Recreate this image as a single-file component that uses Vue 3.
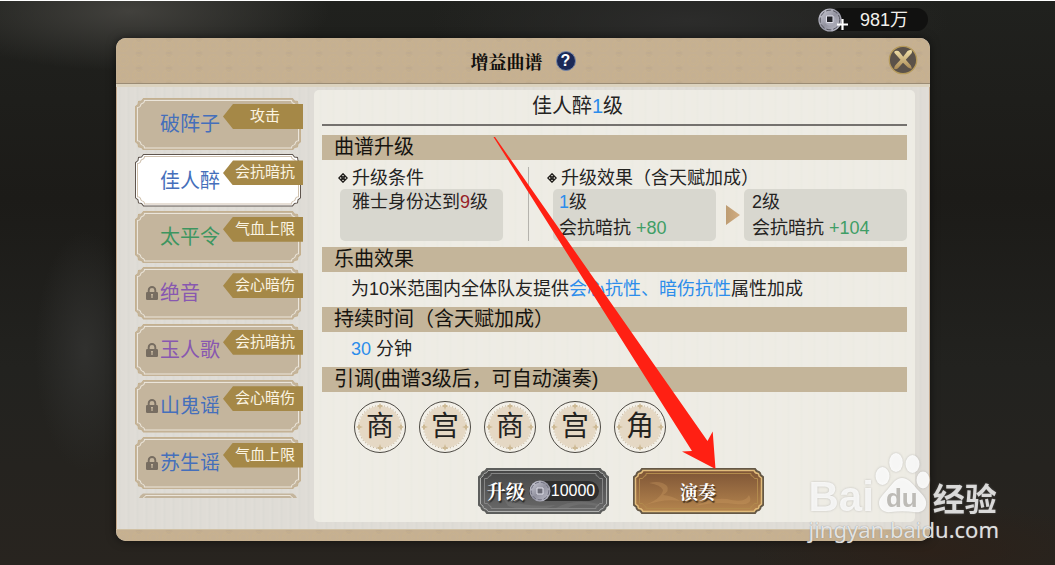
<script setup>
import { ref } from 'vue'

const selected = ref(1)
const songs = [
  { name: '破阵子', tag: '攻击', tone: 'blue', locked: false },
  { name: '佳人醉', tag: '会抗暗抗', tone: 'blue', locked: false },
  { name: '太平令', tag: '气血上限', tone: 'green', locked: false },
  { name: '绝音', tag: '会心暗伤', tone: 'purple', locked: true },
  { name: '玉人歌', tag: '会抗暗抗', tone: 'purple', locked: true },
  { name: '山鬼谣', tag: '会心暗伤', tone: 'blue', locked: true },
  { name: '苏生谣', tag: '气血上限', tone: 'blue', locked: true }
]
const notes = ['商', '宫', '商', '宫', '角']
const dash = '0 3.1'
</script>

<template>
  <div class="stage">
    <div class="wallet">
      <svg class="coin" viewBox="0 0 30 24" aria-hidden="true">
        <defs>
          <linearGradient id="silver" x1="0" y1="0" x2="1" y2="1">
            <stop offset="0" stop-color="#d2d2dc" />
            <stop offset=".5" stop-color="#92929f" />
            <stop offset="1" stop-color="#c4c4d0" />
          </linearGradient>
        </defs>
        <circle cx="12" cy="12" r="11.6" fill="url(#silver)" />
        <circle cx="12" cy="12" r="9.8" fill="none" stroke="#55555f" stroke-dasharray="5 2" />
        <circle cx="12" cy="12" r="5.8" fill="#a9a9b6" />
        <path d="M8.5 8h6.500v6.500h-6.500z" fill="#222228" stroke="#dedee8" />
        <path d="M19 16.500h11M24.500 11v11" stroke="#fff" stroke-width="2.200" />
      </svg>
      <span>981万</span>
    </div>

    <main class="dialog">
      <header class="head">
        <h1>增益曲谱</h1>
        <button class="help" type="button" aria-label="帮助">?</button>
        <button class="close" type="button" aria-label="关闭">
          <svg viewBox="0 0 30 30">
            <defs>
              <linearGradient id="gold" x1="0" y1="0" x2="0" y2="1">
                <stop offset="0" stop-color="#f0e0aa" />
                <stop offset="1" stop-color="#a98953" />
              </linearGradient>
            </defs>
            <circle cx="15" cy="15" r="13.700" fill="#5b5249" stroke="#b59a5b" stroke-width="1.300" />
            <path d="M6.500 8Q5.500 6 8.500 5.700Q10.500 5.500 11.500 7L15.200 11.800L19.500 6Q22.500 4.300 24 5.500Q24.500 7.500 22.500 9.500L17.800 14.800L22.800 20.500Q24 22.500 23.500 24L20 22.500L15 17.700L10 23.300Q7.500 25 6 23.500Q6.200 21 8.500 19L12.500 14.700Z" fill="url(#gold)" />
          </svg>
        </button>
      </header>

      <div class="body">
        <nav class="songs">
          <button
            v-for="(song, i) in songs"
            :key="song.name"
            type="button"
            class="song"
            :class="[song.tone, { active: selected === i }]"
            @click="selected = i"
          >
            <svg class="frame" viewBox="0 0 166 52" preserveAspectRatio="none" aria-hidden="true">
              <path class="outer" d="M8.500 .500H157.500L159.500 3L162.500 3.500L163 6.500L165.500 8.500V43.500L163 45.500L162.500 48.500L159.500 49L157.500 51.500H8.500L6.500 49L3.500 48.500L3 45.500L.500 43.500V8.500L3 6.500L3.500 3.500L6.500 3Z" />
              <path class="inner" d="M9.500 2.500H156.500Q156.500 5 159 5.500Q160.500 6 160.500 8Q161.500 9.500 163.500 9.500V42.500Q161.500 42.500 160.500 44Q160.500 46 159 46.500Q156.500 47 156.500 49.500H9.500Q9.500 47 7 46.500Q5.500 46 5.500 44Q4.500 42.500 2.500 42.500V9.500Q4.500 9.500 5.500 8Q5.500 6 7 5.500Q9.500 5 9.500 2.500Z" />
            </svg>
            <svg v-if="song.locked" class="lock" viewBox="0 0 12 14" aria-label="未解锁">
              <path d="M2.700 7V4.300a3.300 3.300 0 0 1 6.600 0V7" fill="none" stroke="#776d61" stroke-width="1.900" />
              <rect x="0" y="6" width="12" height="8" rx="1.200" fill="#776d61" />
              <path d="M6 8v4M5 8.700h2" stroke="#c4b59d" stroke-width="1.300" />
            </svg>
            <span class="name">{{ song.name }}</span>
            <span class="tag">{{ song.tag }}</span>
          </button>
          <div class="next">
            <svg viewBox="0 0 166 5" preserveAspectRatio="none" aria-hidden="true">
              <path d="M4 5Q5 2 8 .500H158Q161 2 162 5Z" fill="#c4b59d" />
              <path d="M8 5Q10 4.500 10.500 2.500H155.500Q156 4.500 158 5" fill="none" stroke="#ebe5da" />
            </svg>
          </div>
        </nav>

        <section class="detail">
          <h2>佳人醉<em>1</em>级</h2>

          <h3>曲谱升级</h3>
          <div class="upgrade">
            <h4 class="need">
              <svg viewBox="0 0 10 10"><path d="M5 .8L9.200 5L5 9.200L.8 5ZM5 3.600L6.400 5L5 6.400L3.600 5ZM2.800 2.800L4.300 4.300M7.200 2.800L5.700 4.300M2.800 7.200L4.300 5.700M7.200 7.200L5.700 5.700" /></svg>
              升级条件
            </h4>
            <i class="divider"></i>
            <h4 class="gain">
              <svg viewBox="0 0 10 10"><path d="M5 .8L9.200 5L5 9.200L.8 5ZM5 3.600L6.400 5L5 6.400L3.600 5ZM2.800 2.800L4.300 4.300M7.200 2.800L5.700 4.300M2.800 7.200L4.300 5.700M7.200 7.200L5.700 5.700" /></svg>
              升级效果（含天赋加成）
            </h4>
            <div class="card require"><p>雅士身份达到<b>9</b>级</p></div>
            <div class="card now"><p><em>1</em>级</p><p>会抗暗抗 <ins>+80</ins></p></div>
            <i class="triangle"></i>
            <div class="card after"><p>2级</p><p>会抗暗抗 <ins>+104</ins></p></div>
          </div>

          <h3>乐曲效果</h3>
          <p class="line">为10米范围内全体队友提供<em>会心抗性、暗伤抗性</em>属性加成</p>

          <h3>持续时间（含天赋加成）</h3>
          <p class="line"><em>30</em> 分钟</p>

          <h3>引调(曲谱3级后，可自动演奏)</h3>
          <div class="notes">
            <div v-for="(note, i) in notes" :key="i" class="note">
              <svg viewBox="0 0 52 52" aria-hidden="true">
                <circle cx="26" cy="26" r="25.500" fill="#f3f0e8" stroke="#4c4943" />
                <circle cx="26" cy="26" r="21" fill="#e5d8c4" />
                <circle cx="26" cy="26" r="21.500" fill="none" stroke="#b8a88e" stroke-linecap="round" :stroke-dasharray="dash" />
                <path d="M26 2l1 2h1.500v2H27l-1 3l-1-3h-1.500V4H25zM26 50l1-2h1.500v-2H27l-1-3l-1 3h-1.500v2H25zM2 26l2-1v-1.500h2V25l3 1l-3 1v1.500H4V27zM50 26l-2-1v-1.500h-2V25l-3 1l3 1v1.500h2V27z" fill="#cdb994" />
              </svg>
              <span>{{ note }}</span>
            </div>
          </div>

          <div class="actions">
            <button class="act dark" type="button">
              <svg class="frame" viewBox="0 0 131 46" preserveAspectRatio="none" aria-hidden="true">
                <defs>
                  <linearGradient id="slate" x1="0" y1="0" x2="0" y2="1">
                    <stop offset="0" stop-color="#464646" />
                    <stop offset="1" stop-color="#6a6a6a" />
                  </linearGradient>
                </defs>
                <path d="M9 1H122Q123.500 4 126 4Q127.500 5 127.500 7L130 9V37L127.500 39Q127.500 41 126 42Q123.500 42 122 45H9Q7.500 42 5 42Q3.500 41 3.500 39L1 37V9L3.500 7Q3.500 5 5 4Q7.500 4 9 1Z" fill="url(#slate)" stroke="#5d5e5c" stroke-width="2" />
                <path d="M10 2.500H121Q122 5.500 125 5.500Q126 6 126 8L128.500 10V36L126 38Q126 40 125 40.500Q122 40.500 121 43.500H10Q9 40.500 6 40.500Q5 40 5 38L2.500 36V10L5 8Q5 6 6 5.500Q9 5.500 10 2.500Z" fill="none" stroke="#b0b1af" />
                <path d="M13 5.500H118V7.500Q120 7.500 121.500 10.500H124.500V35.500H121.500Q120 38.500 118 38.500V40.500H13V38.500Q11 38.500 9.500 35.500H6.500V10.500H9.500Q11 7.500 13 7.500Z" fill="none" stroke="#858585" />
                <path d="M25 30Q44 40 78 37Q58 46 30 38ZM78 40Q95 30 121 36V38Q98 34 90 40Z" fill="#909090" opacity=".25" />
              </svg>
              <span class="label">升级</span>
              <span class="cost">
                <svg viewBox="0 0 22 22" aria-hidden="true">
                  <circle cx="11" cy="11" r="10.500" fill="url(#silver)" />
                  <circle cx="11" cy="11" r="8.800" fill="none" stroke="#6d6d7c" stroke-dasharray="4 2" />
                  <path d="M8 8h6v6h-6z" fill="#6b6b76" stroke="#e2e2ec" />
                </svg>
                10000
              </span>
            </button>
            <button class="act bronze" type="button">
              <svg class="frame" viewBox="0 0 131 46" preserveAspectRatio="none" aria-hidden="true">
                <defs>
                  <linearGradient id="bronze" x1="0" y1="0" x2="0" y2="1">
                    <stop offset="0" stop-color="#7c5335" />
                    <stop offset="1" stop-color="#b7874f" />
                  </linearGradient>
                </defs>
                <path d="M9 1H122Q123.500 4 126 4Q127.500 5 127.500 7L130 9V37L127.500 39Q127.500 41 126 42Q123.500 42 122 45H9Q7.500 42 5 42Q3.500 41 3.500 39L1 37V9L3.500 7Q3.500 5 5 4Q7.500 4 9 1Z" fill="url(#bronze)" stroke="#655846" stroke-width="2" />
                <path d="M16 15Q28 12 34 18Q37 23 30 27Q40 28 47 33Q32 30 9 38Q29 31 30 22Q28 17 16 15ZM62 38Q80 29 94 31Q112 36 116 27Q122 38 102 36Q84 33 62 38Z" fill="#d09f62" opacity=".32" />
                <path d="M10 2.500H121Q122 5.500 125 5.500Q126 6 126 8L128.500 10V36L126 38Q126 40 125 40.500Q122 40.500 121 43.500H10Q9 40.500 6 40.500Q5 40 5 38L2.500 36V10L5 8Q5 6 6 5.500Q9 5.500 10 2.500Z" fill="none" stroke="#e2bd7c" stroke-width="1.500" />
                <path d="M13 5.500H118V7.500Q120 7.500 121.500 10.500H124.500V35.500H121.500Q120 38.500 118 38.500V40.500H13V38.500Q11 38.500 9.500 35.500H6.500V10.500H9.500Q11 7.500 13 7.500Z" fill="none" stroke="#b28a4d" />
              </svg>
              <span class="label">演奏</span>
            </button>
          </div>
        </section>
      </div>
      <footer class="foot"></footer>
    </main>

    <svg class="pointer" viewBox="0 0 1055 565" aria-hidden="true">
      <path d="M493.500 137L495 137L707.500 441L712.700 431.500L715.500 469L682 451.500L692 451Z" fill="#ff2013" />
    </svg>

    <div class="mark">
      <div class="brand">
        <span class="bai">Bai</span>
        <div class="paw">
          <svg viewBox="0 0 56 62" aria-hidden="true">
            <ellipse cx="8.500" cy="24" rx="7" ry="9" />
            <ellipse cx="22" cy="10.500" rx="6.800" ry="9.500" />
            <ellipse cx="38.500" cy="12" rx="7" ry="9" />
            <ellipse cx="49" cy="28" rx="6.500" ry="8.500" />
            <path d="M28 26C34 26 38 31 43 37C50 44 53 48 52 53C51 59 46 61 40 60C32 59 24 59 17 60C10 61 5 57 5 51C5 46 9 43 14 37C19 31 22 26 28 26Z" />
          </svg>
          <span>du</span>
        </div>
        <span class="jing">经验</span>
      </div>
      <div class="url">jingyan.baidu.com</div>
    </div>
  </div>
</template>

<style>
body { margin: 0; background: #22221f; }
</style>

<style scoped>
* { box-sizing: border-box; }
h1, h2, h3, h4, p { margin: 0; font-weight: 400; }
em, i { font-style: normal; }
button { margin: 0; padding: 0; border: 0; background: none; font: inherit; color: inherit; cursor: pointer; }
.stage {
  position: relative;
  display: flex;
  flex-direction: column;
  min-height: 100vh;
  padding: 7px 125px 24px 116px;
  overflow: hidden;
  border-top: 1px solid #fff;
  color: #24231f;
  font-family: "Liberation Sans", "KaiTi", "Noto Sans CJK SC", sans-serif;
  background:
    radial-gradient(ellipse 200px 60px at 130px 10px, #42413d, transparent),
    radial-gradient(ellipse 50px 120px at 85px 350px, #30302e, transparent),
    radial-gradient(ellipse 180px 50px at 930px 550px, #2c2119, transparent),
    radial-gradient(ellipse 260px 60px at 690px 20px, #2c2c2b, transparent),
    linear-gradient(180deg, #20211e, #1c1b18 35%, #22221f 65%, #28241f);
}
.wallet {
  position: relative;
  display: flex;
  align-items: center;
  justify-content: flex-end;
  align-self: flex-end;
  width: 100px;
  height: 23px;
  margin: 0 2px 7px 0;
  padding-right: 20px;
  border-radius: 12px;
  background: #111110;
  color: #f1f0ec;
  font-size: 18px;
  line-height: 22px;
  white-space: nowrap;
}
.coin { position: absolute; left: -10px; top: 0; width: 30px; height: 24px; }
.dialog {
  display: flex;
  flex: 1;
  flex-direction: column;
  overflow: hidden;
  border-radius: 10px;
  background: #dedbd5;
  box-shadow: 0 0 10px #0008;
}
.head, .foot {
  background:
    radial-gradient(circle at 50% 50%, transparent 2px, #cbb48b66 3px, transparent 4px, #cbb48b66 6px, transparent 7px) 0 0 / 15px 15px,
    radial-gradient(circle at 50% 50%, #b8a48d77 1px, #b8a48d44 3px, transparent 4px) 8px 8px / 30px 15px,
    #c5b092;
}
.head {
  position: relative;
  display: flex;
  align-items: center;
  justify-content: center;
  gap: 13px;
  height: 46px;
  border-bottom: 1px solid #9b8c75;
}
.head h1 {
  color: #100e0b;
  font-family: "Noto Serif CJK SC", "Noto Sans CJK SC", serif;
  font-size: 18px;
  font-weight: 700;
  line-height: 24px;
}
.help {
  width: 20px;
  height: 20px;
  border: 1px solid #7485a8;
  border-radius: 50%;
  background: #1b2957;
  color: #fff;
  font-size: 16px;
  font-weight: 700;
  line-height: 18px;
  text-align: center;
}
.close { position: absolute; right: 12px; top: 7px; width: 30px; height: 30px; }
.close svg { display: block; }
.body {
  display: grid;
  flex: 1;
  grid-template-columns: 166px 1fr;
  gap: 13px;
  padding: 3px 15px 7px 19px;
  border-top: 3px solid #dcd3bf;
  background: repeating-linear-gradient(90deg, #e0ddd7 0 2px, #dcdad4 3px 4px, #dfdcd6 5px 9px);
  background-clip: padding-box;
  box-shadow: inset 1px 0 #c5a98c, inset -1px 0 #c5a98c;
}
.foot { height: 12px; border-top: 1px solid #d0c0a3; }
.songs {
  display: grid;
  grid-template-rows: repeat(7, 1fr) 5px;
  gap: 4px;
  padding: 8px 0 24px;
}
.song {
  position: relative;
  display: flex;
  align-items: center;
  padding-left: 25px;
  font-size: 20px;
  line-height: 24px;
  text-align: left;
}
.frame { position: absolute; inset: 0; width: 100%; height: 100%; }
.song .outer { fill: #c4b59d; stroke: #c4b08f; }
.song .inner { fill: none; stroke: #ebe5da; }
.song.active .outer { fill: #fff; stroke: #5f554e; }
.song.active .inner { stroke: #cfc0ad; }
.song .name { position: relative; }
.blue { color: #456fbb; }
.green { color: #3d9560; }
.purple { color: #8858b0; }
.lock { position: absolute; left: 11px; top: 19px; width: 12px; height: 14px; }
.tag {
  position: absolute;
  right: -2px;
  top: 6px;
  width: 80px;
  height: 25px;
  padding-left: 4px;
  background: #a58847;
  clip-path: polygon(10px 0, 100% 0, 100% 100%, 10px 100%, 0 50%);
  color: #fbf4e2;
  font-size: 15px;
  line-height: 23px;
  text-align: center;
}
.next svg { display: block; width: 100%; height: 5px; }
.detail {
  min-width: 0;
  padding: 0 8px 8px;
  border-radius: 5px;
  background: repeating-linear-gradient(90deg, #eeece4 0 5px, #ecebe3 6px 7px, #eeece5 8px 13px);
}
.detail em { color: #2c8deb; }
.detail h2 {
  height: 36px;
  margin-bottom: 9px;
  padding-right: 74px;
  border-bottom: 2px solid #74716e;
  font-size: 20px;
  line-height: 32px;
  text-align: center;
}
.detail h3 {
  height: 25px;
  padding-left: 12px;
  background: #c4b59a;
  color: #15130f;
  font-size: 20px;
  line-height: 24px;
  white-space: nowrap;
}
.upgrade {
  display: grid;
  grid-template-columns: 1fr 50px 1fr 28px 1fr;
  grid-template-rows: 29px 52px;
  margin-bottom: 6px;
  padding-left: 18px;
}
.upgrade h4 {
  display: flex;
  align-items: center;
  gap: 4px;
  padding-top: 6px;
  font-size: 18px;
  line-height: 22px;
  white-space: nowrap;
}
.upgrade h4 svg { width: 10px; height: 10px; fill: none; stroke: #1d1b18; stroke-width: 1.3; }
.upgrade .need { grid-area: 1 / 1; margin-left: -2px; }
.upgrade .gain { grid-area: 1 / 3 / 2 / 6; margin-left: -6px; }
.divider { grid-area: 1 / 2 / 3 / 3; justify-self: center; width: 1px; margin-top: 7px; background: #b5b3ad; }
.card {
  grid-row: 2;
  padding-left: 8px;
  border-radius: 5px;
  background: #d8d7cf;
  font-size: 18px;
  line-height: 26px;
  white-space: nowrap;
}
.card b { color: #962026; font-weight: 400; }
.card ins { color: #3f9e66; text-decoration: none; }
.require { grid-column: 1; padding-left: 12px; }
.now { grid-column: 3; padding-left: 6px; }
.after { grid-column: 5; }
.triangle {
  grid-area: 2 / 4;
  align-self: center;
  justify-self: end;
  width: 14px;
  height: 20px;
  margin-right: 4px;
  background: linear-gradient(90deg, #bd9c72, #d2ad82);
  clip-path: polygon(0 0, 100% 50%, 0 100%);
}
.line { padding-left: 29px; font-size: 18px; line-height: 35px; white-space: nowrap; }
.notes { display: flex; gap: 13px; padding: 9px 0 15px 32px; }
.note { position: relative; display: grid; place-items: center; width: 52px; height: 52px; }
.note svg { position: absolute; inset: 0; }
.note span { position: relative; font-size: 28px; line-height: 40px; }
.actions { display: flex; justify-content: center; gap: 24px; padding-left: 12px; }
.act {
  position: relative;
  display: flex;
  align-items: center;
  justify-content: center;
  width: 131px;
  height: 46px;
  color: #fff;
}
.label {
  position: relative;
  font-family: "Noto Serif CJK SC", "Noto Sans CJK SC", serif;
  font-size: 18px;
  font-weight: 700;
  line-height: 26px;
  text-shadow: 1px 2px 1px #0009;
}
.dark .label { font-size: 19px; }
.cost {
  position: relative;
  display: flex;
  align-items: center;
  height: 20px;
  margin-left: 4px;
  padding-right: 4px;
  border-radius: 10px;
  background: #2e2e2e;
  font-size: 16px;
}
.cost svg { width: 22px; height: 22px; }
.pointer { position: absolute; inset: -1px 0 0; width: 100%; height: calc(100% + 1px); pointer-events: none; }
.mark { position: absolute; right: 56px; bottom: 24px; color: #fffc; pointer-events: none; }
.brand { display: flex; align-items: flex-end; height: 62px; margin-bottom: 3px; filter: drop-shadow(0 0 1px #8888); }
.bai { font-size: 42px; font-weight: 700; line-height: 34px; }
.paw { position: relative; width: 56px; height: 62px; }
.paw svg { display: block; fill: #fffd; }
.paw span { position: absolute; left: 0; right: 0; bottom: 2px; color: #bdbbb6; font-size: 26px; font-weight: 700; line-height: 28px; text-align: center; }
.jing { margin-left: 3px; font-family: "Noto Sans CJK SC", sans-serif; font-size: 32px; font-weight: 700; line-height: 34px; }
.url { font-family: "Noto Sans", sans-serif; font-size: 22px; line-height: 24px; text-shadow: 0 0 1px #777; }
</style>
